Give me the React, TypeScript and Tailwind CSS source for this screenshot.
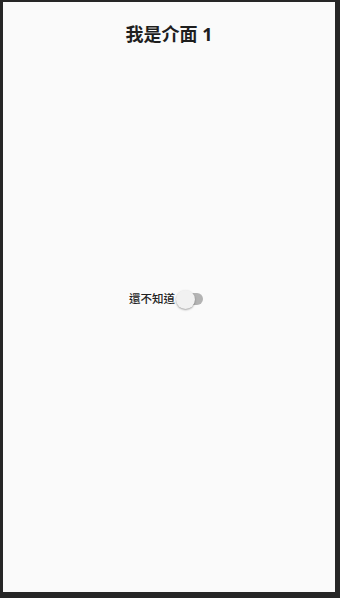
import React from "react";

export default function App() {
  return (
    <div className="w-[340px] h-[598px] bg-[#262626] pt-[2px] pl-[3px] pr-[5px] pb-[6px]" style={{ fontFamily: '"Noto Sans", "Noto Sans CJK TC", "Noto Sans CJK SC", sans-serif' }}>
      <div className="w-full h-full bg-[#fafafa] flex flex-col">
        <div className="h-[64px] flex items-center justify-center pb-[1px]">
          <h1 className="text-[18px] font-bold text-[#1e1e1e] leading-none">我是介面 1</h1>
        </div>
        <div className="flex-1 flex items-center justify-center pb-[60px]">
          <div className="flex items-center mr-[4px]">
            <span className="text-[11.5px] font-medium text-[#222] leading-none">還不知道</span>
            <div className="relative w-[29px] h-[20px] ml-[1px] flex items-center">
              <div className="absolute left-[6px] w-[21px] h-[12px] rounded-full bg-[#b3b3b3]" />
              <div className="absolute left-0 w-[19px] h-[19px] rounded-full bg-[#f1f1f1] shadow-[0_1px_2px_rgba(0,0,0,0.35)]" />
            </div>
          </div>
        </div>
      </div>
    </div>
  );
}
